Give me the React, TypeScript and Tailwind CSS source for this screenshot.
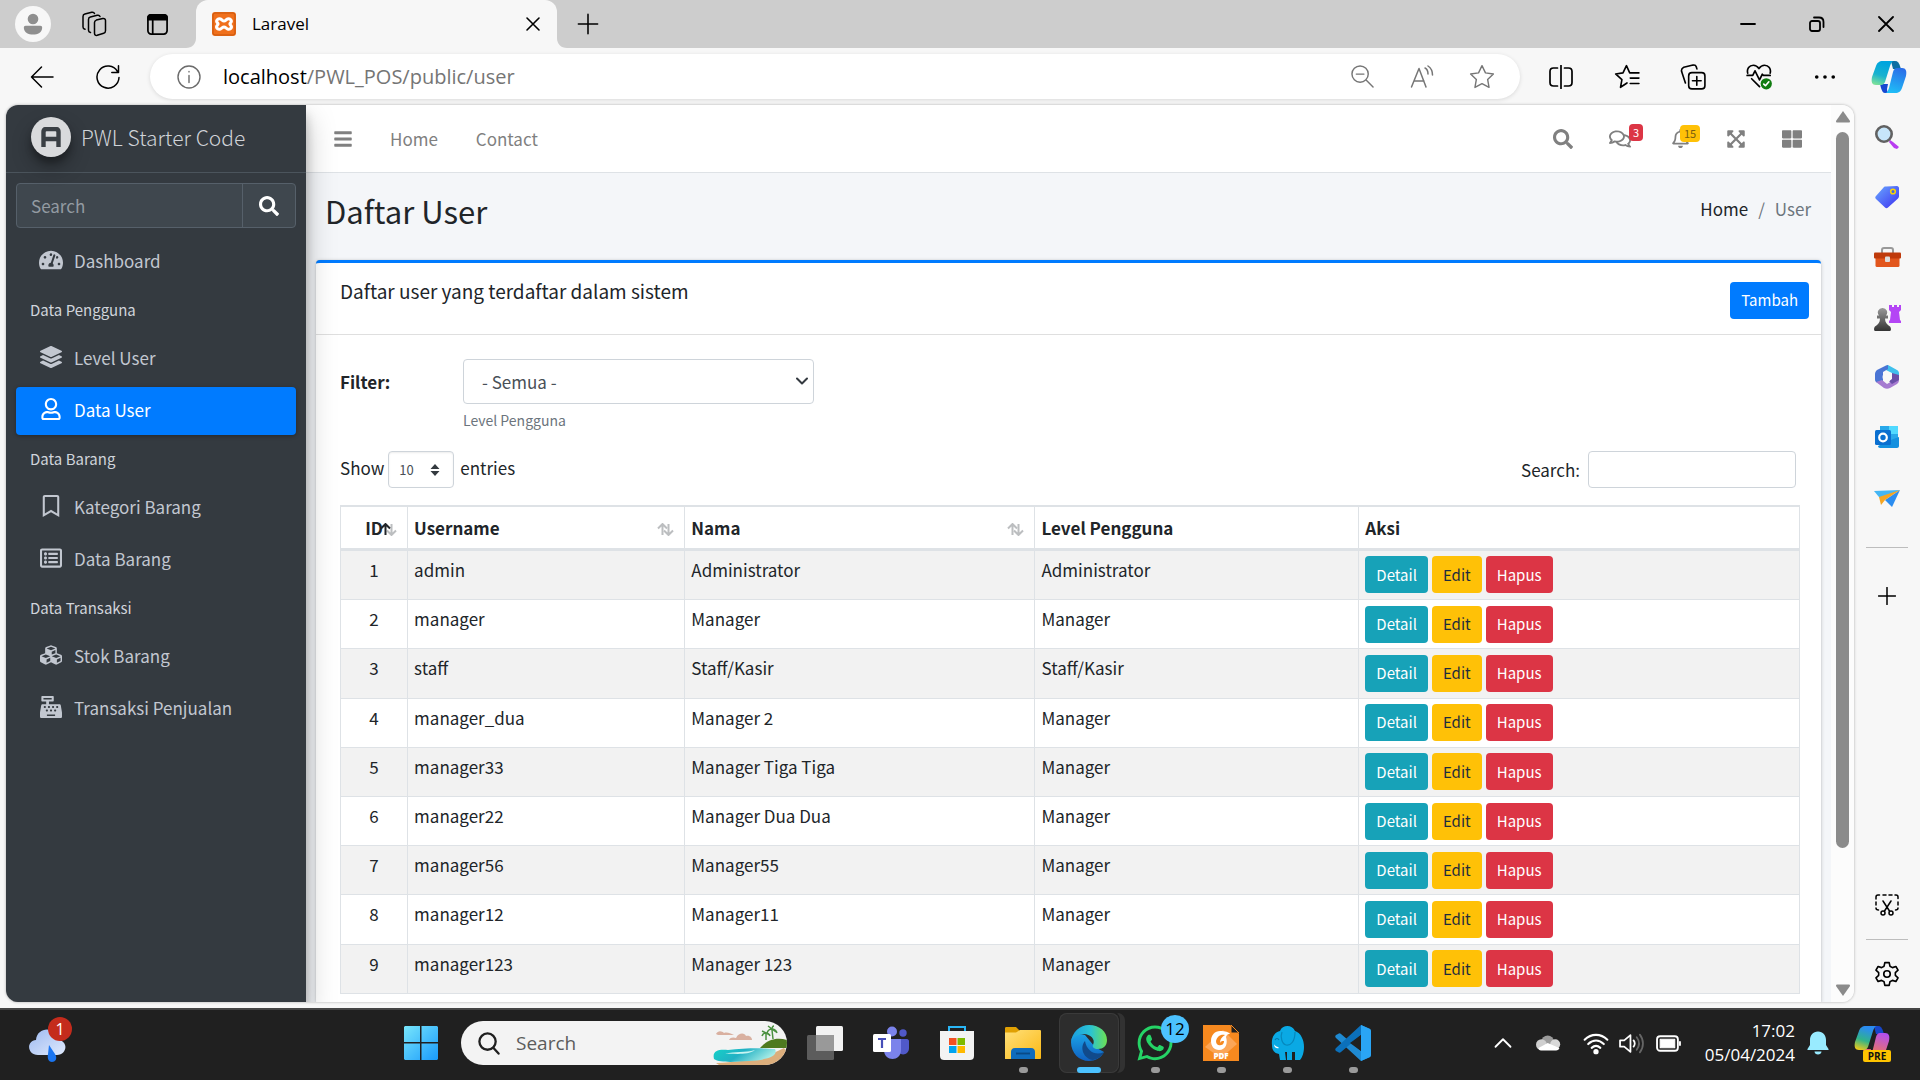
import React from "react";
import {
  FaSearch, FaTachometerAlt, FaLayerGroup, FaRegUser, FaRegBookmark, FaRegListAlt, FaCubes,
  FaCashRegister, FaBars, FaRegComments, FaRegBell, FaExpandArrowsAlt, FaThLarge, FaWhatsapp,
} from "react-icons/fa";

type P = { children: React.ReactNode; size?: string; box?: string; sw?: number };

function Line({ children, size = "size-6", box = "0 0 24 24", sw = 1.5 }: P) {
  return (
    <svg className={`${size} shrink-0`} viewBox={box} fill="none" stroke="currentColor" strokeWidth={sw} strokeLinecap="round" strokeLinejoin="round" aria-hidden="true">
      {children}
    </svg>
  );
}

function Art({ children, size = "size-9", box = "0 0 36 36" }: P) {
  return <svg className={`${size} shrink-0`} viewBox={box} aria-hidden="true">{children}</svg>;
}

function Slot({ label, className, children }: { label: string; className: string; children: React.ReactNode }) {
  return (
    <button type="button" aria-label={label} className={`flex shrink-0 items-center justify-center ${className}`}>
      {children}
    </button>
  );
}

function Copilot({ id, colors }: { id: string; colors: string[] }) {
  return (
    <>
      <defs>
        <linearGradient id={id + "a"} x1="0.6" y1="0" x2="0.3" y2="1">
          <stop offset="0.1" stopColor={colors[0]} />
          <stop offset="0.6" stopColor={colors[1]} />
          <stop offset="1" stopColor={colors[2]} />
        </linearGradient>
        <linearGradient id={id + "b"} x1="0.7" y1="0" x2="0.4" y2="1">
          <stop offset="0" stopColor={colors[3]} />
          <stop offset="1" stopColor={colors[4]} />
        </linearGradient>
      </defs>
      <path d="M20 2h4c3 0 4 2 5 5l1 3h-8z" fill={colors[5]} />
      <path d="M9 25l8 0-1 5c0 2 1 4 2 4h-4c-2 0-3-2-4-5z" fill={colors[6]} />
      <path d="M12 2h11c-2 0-3 2-4 5l-5 16c-1 2-2 3-4 3H5c-4 0-5-3-4-8l4-11c1-3 3-5 7-5z" fill={`url(#${id}a)`} />
      <path d="M24 34H14c2 0 3-2 4-5l4-16c1-3 2-4 4-4h5c4 0 5 3 4 8l-4 12c-1 3-3 5-7 5z" fill={`url(#${id}b)`} />
    </>
  );
}

function TitleBar() {
  return (
    <header className="flex h-12 shrink-0 bg-[#cdcdcd] text-black">
      <div className="flex w-[196px] shrink-0 items-center pl-0.5">
        <Slot label="Profile" className="h-12 w-[62px]">
          <span className="flex size-9 items-center justify-center rounded-full bg-[#f7f7f7]">
            <Art size="size-[22px]" box="0 0 24 24">
              <circle cx="12" cy="6.500" r="5.800" fill="#8f8f8f" />
              <path d="M4 14h16c1.500 0 2 1 2 2 0 5-5 7.500-10 7.500S2 21 2 16c0-1 .5-2 2-2z" fill="#8f8f8f" />
            </Art>
          </span>
        </Slot>
        <Slot label="Workspaces" className="h-12 w-[60px]">
          <Line size="size-[26px]" box="0 0 26 26" sw={1.5}>
            <path d="M13.500 11.500c0-1.400.7-2 1.800-2.400l6.500-1.600c1.600-.3 2.700.4 2.700 2v10.300c0 1.300-.7 2.200-1.800 2.500l-6.500 2c-1.500.3-2.700-.3-2.700-2z" />
            <path d="M9.500 21.500c-1.200-.3-2-1-2-2.300V8.500c0-1.400.7-2.200 1.900-2.500l6.800-1.700c1.500-.3 2.400.2 2.800 1.200" />
            <path d="M4 18.300c-1.200-.3-2-1-2-2.300V5.500C2 4.200 2.700 3.300 3.900 3l6.800-1.700c1.500-.3 2.400.2 2.800 1.200" />
          </Line>
        </Slot>
        <Slot label="Tab actions" className="h-12 w-[66px]">
          <Line size="size-[23px]" sw={1.8}>
            <rect x="2" y="2" width="20" height="20" rx="3.500" />
            <path d="M2 7V5c0-2 1-3 3-3h14c2 0 3 1 3 3v2z" fill="currentColor" />
            <path d="M7 7v15" />
          </Line>
        </Slot>
      </div>
      <div className="relative flex w-[361px] shrink-0 items-center rounded-t-xl bg-[#f7f7f7] pl-4">
        <span className="absolute bottom-0 -left-2.5"><Art size="size-2.5" box="0 0 10 10"><path d="M10 0v10H0C6 10 10 6 10 0z" fill="#f7f7f7" /></Art></span>
        <span className="absolute -right-2.5 bottom-0"><Art size="size-2.5" box="0 0 10 10"><path d="M0 0v10h10C4 10 0 6 0 0z" fill="#f7f7f7" /></Art></span>
        <Art size="size-6" box="0 0 24 24">
          <rect width="24" height="24" rx="3" fill="#f0701c" />
          <rect x="1" y="1" width="22" height="22" rx="2" fill="none" stroke="#c9560d" />
          <path d="M8.500 7c-3-1-5 2-3 4 .8.700.8 1.300 0 2-2 2-.5 5 3 4 1.500-.5 2-2 3.500-2s2 1.500 3.500 2c3.500 1 5-2 3-4-.8-.7-.8-1.300 0-2 2-2 0-5-3-4-1.500.5-2 2-3.500 2s-2-1.500-3.500-2z" fill="none" stroke="#fff" strokeWidth="3" />
        </Art>
        <span className="ml-4 flex-1 text-[17px]">Laravel</span>
        <Slot label="Close tab" className="size-12"><Line size="size-4"><path d="M3 3l18 18M21 3L3 21" strokeWidth="2.400" /></Line></Slot>
      </div>
      <Slot label="New tab" className="w-[62px]"><Line size="size-[22px]"><path d="M12 1.500v21M1.500 12h21" strokeWidth="1.700" /></Line></Slot>
      <div className="ml-auto flex">
        <Slot label="Minimize" className="w-[69px]"><Line size="size-4" box="0 0 16 16" sw={1.8}><path d="M1 8h14" /></Line></Slot>
        <Slot label="Restore" className="w-[69px]">
          <Line size="size-4" box="0 0 16 16" sw={1.8}><rect x="1" y="5" width="10" height="10" rx="2" /><path d="M5 1.500h5c3 0 4.500 1.500 4.500 4.500v5" /></Line>
        </Slot>
        <Slot label="Close" className="w-[69px]"><Line size="size-4" box="0 0 16 16" sw={1.8}><path d="M1 1l14 14M15 1L1 15" /></Line></Slot>
      </div>
    </header>
  );
}

function Toolbar() {
  return (
    <div className="flex h-[57px] shrink-0 items-center bg-[#f7f7f7] pl-[9px] text-black">
      <Slot label="Back" className="h-11 w-[66px]"><Line><path d="M23 12H1.500M11.500 2L1.500 12l10 10" /></Line></Slot>
      <Slot label="Refresh" className="h-11 w-[66px]"><Line><path d="M21.500 6.500A11 11 0 1 0 23 12.500M22.500.8v6.700h-6.700" /></Line></Slot>
      <form className="ml-[9px] flex h-[45px] min-w-0 flex-1 items-center rounded-full bg-white pr-2 pl-[27px] shadow-[0_1px_4px_rgba(0,0,0,0.12)]">
        <span className="text-[#6b6b6b]"><Line sw={1.4}><circle cx="12" cy="12" r="11" /><path d="M12 10.500v7M12 6.500v.4" /></Line></span>
        <div className="ml-[22px] flex-1 text-[20px] text-[#757575]"><span className="text-black">localhost</span>/PWL_POS/public/user</div>
        <div className="flex text-[#767676]">
          <Slot label="Zoom out" className="h-11 w-[60px]"><Line size="size-[23px]"><circle cx="9.500" cy="9.500" r="8.500" /><path d="M16 16l7 7M5.500 9.500h8" /></Line></Slot>
          <Slot label="Read aloud" className="h-11 w-[60px]"><Line><path d="M1.500 22L9 3.500 16 22M4 16h10M15 3c2 1 3 3 3 6M18 1c3 2 4.500 5 4.500 9" /></Line></Slot>
          <Slot label="Add to favorites" className="h-11 w-[60px]"><Line size="size-[26px]"><path d="M12 1.500l3.200 6.700 7.300 1-5.300 5.100 1.300 7.300L12 18.100l-6.500 3.500 1.300-7.300L1.500 9.200l7.300-1z" strokeWidth="1.300" /></Line></Slot>
        </div>
      </form>
      <div className="ml-2 flex shrink-0">
        <Slot label="Split screen" className="h-11 w-[66px]"><Line><path d="M12 .5v23M8.500 3H4.500C2.500 3 1 4.500 1 6.500v11c0 2 1.500 3.500 3.500 3.500h4M15.500 3h4C21.500 3 23 4.500 23 6.500v11c0 2-1.500 3.500-3.500 3.500h-4" strokeWidth="1.700" /></Line></Slot>
        <Slot label="Favorites" className="h-11 w-[66px]"><Line size="size-[26px]"><path d="M12 17.500l-6 4 1.300-7L1.500 9.200l6.800-1L11.500 1.500l3 6.700h8.500M15 13h8M15 18h8" /></Line></Slot>
        <Slot label="Collections" className="h-11 w-[66px]"><Line size="size-[26px]"><rect x="8" y="8" width="15" height="15" rx="3" /><path d="M15.500 11.500v8M11.500 15.500h8M5 17.500L1.500 7c-.5-2 0-3 2-4L12 1c1.500-.3 2.500 0 3 1.500l.6 2" /></Line></Slot>
        <Slot label="Browser essentials" className="h-11 w-[66px]">
          <Line size="size-[27px]">
            <path d="M1.500 9C.5 5 3 2 6.500 2c2.500 0 4 1.500 5 3 1-1.500 2.500-3 5-3 3.500 0 6 3 5 7M1 11h5l2-4 4 8 2.500-5 1 1h6M5 14l7 7" />
            <circle cx="18" cy="18.500" r="5" fill="#107c10" stroke="none" /><path d="M15.800 18.700l1.500 1.500 3-3.500" stroke="#fff" />
          </Line>
        </Slot>
        <Slot label="More" className="h-11 w-[66px]"><Line size="size-[22px]"><g fill="currentColor" stroke="none"><circle cx="3" cy="12" r="2" /><circle cx="12" cy="12" r="2" /><circle cx="21" cy="12" r="2" /></g></Line></Slot>
        <Slot label="Copilot" className="h-11 w-[62px]"><Art><Copilot id="c" colors={["#00a5de", "#18b2cf", "#7ae09b", "#2a6de8", "#1fbdf7", "#0c6ea3", "#1748d1"]} /></Art></Slot>
      </div>
    </div>
  );
}

function EdgeBar() {
  const slot = "h-[60px] w-full";
  return (
    <nav aria-label="Browser sidebar" className="flex w-[66px] shrink-0 flex-col items-center pt-0.5 pb-1 text-black">
      <Slot label="Search sidebar" className={slot}>
        <Art size="size-6" box="0 0 24 24"><path d="M15 15l3 2 6 5-2 2-3-1-5-6z" fill="#b83cf0" /><circle cx="9" cy="9" r="7.700" fill="#c7e6fa" stroke="#616161" strokeWidth="2.600" /></Art>
      </Slot>
      <Slot label="Shopping" className={slot}>
        <Art size="size-6" box="0 0 24 24">
          <defs><linearGradient id="tag" x1="0" y1="0" x2="1" y2="1"><stop stopColor="#69a8ff" /><stop offset="1" stopColor="#3c2ff0" /></linearGradient></defs>
          <path d="M11 1.500L22 1c1 0 2 1 2 2v8c0 1-.5 2-1 2.500L13 22.500c-1 1-2 1-3 0L1 14c-1-1-1-2 0-3L9 2c.5-.4 1-.5 2-.5z" fill="url(#tag)" /><circle cx="18" cy="6.500" r="2.300" fill="#4166dd" stroke="#fbd305" strokeWidth="1.600" />
        </Art>
      </Slot>
      <Slot label="Tools" className={slot}>
        <Art size="size-[27px]" box="0 0 27 27"><path d="M8 9V6c0-1 1-2 2-2h7c1 0 2 1 2 2v3" fill="none" stroke="#999" strokeWidth="2" /><rect x="1.500" y="11" width="24" height="12" rx="1.500" fill="#e2561d" /><rect y="8.500" width="27" height="6" rx="1" fill="#bf3a0b" /><rect x="11" y="12.500" width="5" height="5.500" rx="1" fill="#ddd" /></Art>
      </Slot>
      <Slot label="Games" className={slot}>
        <Art size="size-[27px]" box="0 0 27 27">
          <defs><linearGradient id="pawn" x1="0" y1="0" x2="0" y2="1"><stop stopColor="#999" /><stop offset="1" stopColor="#333" /></linearGradient></defs>
          <path d="M16 1h2v2h2V1h3v2h2V1h2v5l-2 2 1 8 1 1v2H15v-2l1-1 1-8-2-2V1z" fill="#b445f5" />
          <path d="M8.500 4a4.500 4.500 0 0 1 3.500 7.500h2v3h-3c0 4 2 6 5 8 1 1 1.500 4 0 4.500H1c-1.500-.5-1-3.500 0-4.500 3-2 5-4 5-8H3v-3h2A4.500 4.500 0 0 1 8.500 4z" fill="url(#pawn)" />
        </Art>
      </Slot>
      <Slot label="Microsoft 365" className={slot}>
        <Art size="size-6" box="0 0 24 24"><path d="M10 1l3-1 9 5c1 .5 2 2 2 3v6l-7-4V8l-6-3z" fill="#3fc0ec" /><path d="M10 1l3-1v4L8 7v9l-3 3-4-2c-1-1-1-2-1-3V9c0-2 1-3 2-4z" fill="#4a74d4" /><path d="M1 17l6-2 5 4 5-3 7-4v3c0 2-1 3-2 4l-7 4c-2 1-4 1-6 0z" fill="#a67bd0" /><path d="M17 8l7 2v5l-7 4-3-3 3-2z" fill="#6a4fa8" /><circle cx="12" cy="12" r="4.500" fill="#f7f7f7" /></Art>
      </Slot>
      <Slot label="Outlook" className={slot}>
        <Art size="size-6" box="0 0 24 24"><rect x="5" y="1" width="18" height="16" fill="#28a8ea" /><path d="M14 1h9v8h-9z" fill="#50d9ff" /><path d="M24 12v9c0 1-1 2-2 2H5c-1 0-2-1-2-2l10-5z" fill="#1490df" /><rect y="5" width="16" height="15" rx="1.500" fill="#0a6fd0" /><circle cx="8" cy="12.500" r="3.800" fill="none" stroke="#fff" strokeWidth="2.200" /></Art>
      </Slot>
      <Slot label="Drop" className={slot}>
        <Art size="size-[26px]" box="0 0 26 26"><path d="M0 7l26-1L9 15 5 13z" fill="#44b6f4" /><path d="M26 6L11 16l7 7z" fill="#2b8df0" /><path d="M26 6L5 13l2 8 4-5z" fill="#f5a623" /></Art>
      </Slot>
      <hr className="mt-5 w-[42px] border-[#bdbdbd]" />
      <Slot label="Customize" className="mt-[18px] h-[60px] w-full"><Line size="size-[18px]" box="0 0 18 18"><path d="M9 .5v17M.5 9h17" /></Line></Slot>
      <div className="mt-auto flex w-full flex-col items-center">
        <Slot label="Screenshot" className={slot}>
          <Line><path d="M1 6V4c0-1.500.8-2 2-2h1.500M8 2h3M14 2h3M20 2h1c1.500 0 2 .8 2 2v1.500M23 9v3M1 9v3M1 15c0 1.500.8 2 2.500 2M23 15c0 1.500-.8 2-2.500 2M8 8l6.500 10M16 8L9.500 18" /><circle cx="8" cy="20" r="2" /><circle cx="16" cy="20" r="2" /></Line>
        </Slot>
        <hr className="my-1 w-[42px] border-[#bdbdbd]" />
        <Slot label="Settings" className={slot}>
          <Line size="size-[26px]"><path d="M10 1.500h4l.7 3.300 2.300 1.300 3.200-1 2 3.400-2.500 2.300v2.400l2.500 2.300-2 3.400-3.200-1-2.300 1.300-.7 3.300h-4l-.7-3.300L7 17.900l-3.200 1-2-3.400 2.500-2.300v-2.400L1.800 8.500l2-3.400 3.200 1 2.300-1.300z" /><circle cx="12" cy="12" r="3" /></Line>
        </Slot>
      </div>
    </nav>
  );
}

const menu = [
  { items: [{ label: "Dashboard", Icon: FaTachometerAlt }] },
  { title: "Data Pengguna", items: [{ label: "Level User", Icon: FaLayerGroup }, { label: "Data User", Icon: FaRegUser, active: true }] },
  { title: "Data Barang", items: [{ label: "Kategori Barang", Icon: FaRegBookmark }, { label: "Data Barang", Icon: FaRegListAlt }] },
  { title: "Data Transaksi", items: [{ label: "Stok Barang", Icon: FaCubes }, { label: "Transaksi Penjualan", Icon: FaCashRegister }] },
] as { title?: string; items: { label: string; Icon: React.ComponentType<{ className?: string }>; active?: boolean }[] }[];

function SideMenu() {
  return (
    <aside className="relative z-10 w-[300px] shrink-0 bg-[#343a40] text-[17px] text-[#c2c7d0] shadow-[0_14px_28px_rgba(0,0,0,0.25),0_10px_10px_rgba(0,0,0,0.22)]">
      <a href="#" className="flex h-[68px] items-center border-b border-[#4b545c] pb-1 pl-[25px]">
        <span className="flex size-10 items-center justify-center rounded-full bg-[#d9dadc] shadow-[0_10px_20px_rgba(0,0,0,0.3),0_6px_6px_rgba(0,0,0,0.25)]">
          <Art size="size-5" box="0 0 20 20"><path d="M2.500 20V5c0-2 1-3 3-3h9c2 0 3 1 3 3v15M2.500 12h15" fill="none" stroke="#3a3f44" strokeWidth="4.400" /></Art>
        </span>
        <span className="ml-2.5 pt-0.5 text-[21px] font-light text-[#d0d3d8]">PWL Starter Code</span>
      </a>
      <div className="px-2.5 pt-2.5">
        <div className="mb-2.5 flex h-[45px] overflow-hidden rounded border border-[#56606a] bg-[#3f474e]">
          <input aria-label="Search menu" placeholder="Search" className="min-w-0 flex-1 bg-transparent px-3.5 text-white placeholder:text-[#939ba2]" />
          <button type="button" aria-label="Search" className="flex w-[53px] items-center justify-center border-l border-[#56606a] text-white"><FaSearch className="size-5" /></button>
        </div>
        {menu.map((group, i) => (
          <section key={i}>
            {group.title && <h2 className="h-[45px] px-3.5 pt-2 text-[15px] leading-6 text-[#d0d4db]">{group.title}</h2>}
            {group.items.map(({ label, Icon, active }) => (
              <a key={label} href="#" className={`mb-1 flex h-12 items-center rounded pb-1 pl-5 ${active ? "bg-[#007bff] text-white shadow-[0_1px_4px_rgba(0,0,0,0.3)]" : ""}`}>
                <span className="flex w-[30px] justify-center"><Icon className={label === "Dashboard" ? "size-6" : "size-[22px]"} /></span>
                <span className="ml-2 pt-0.5">{label}</span>
              </a>
            ))}
          </section>
        ))}
      </div>
    </aside>
  );
}

function NavBar() {
  const badge = "absolute -top-1 rounded px-1 text-[11px] leading-[17px]";
  return (
    <nav className="flex h-[68px] shrink-0 items-center border-b border-[#dee2e6] bg-white pr-[29px] pl-[27px] text-[17px] text-[#808080]">
      <button type="button" aria-label="Toggle menu"><FaBars className="size-5" /></button>
      <a href="#" className="ml-[37px]">Home</a>
      <a href="#" className="ml-[38px]">Contact</a>
      <div className="ml-auto flex items-center">
        <button type="button" aria-label="Search" className="mr-9"><FaSearch className="size-5" /></button>
        <button type="button" aria-label="Messages" className="relative mr-10"><FaRegComments className="size-[22px]" /><span className={`${badge} left-5 bg-[#dc3545] text-white`}>3</span></button>
        <button type="button" aria-label="Notifications" className="relative mr-9"><FaRegBell className="size-[19px]" /><span className={`${badge} left-[9px] bg-[#ffc107] text-[#7a5d10]`}>15</span></button>
        <button type="button" aria-label="Fullscreen" className="mr-9"><FaExpandArrowsAlt className="size-5" /></button>
        <button type="button" aria-label="Widgets"><FaThLarge className="size-5" /></button>
      </div>
    </nav>
  );
}

const rows = [
  ["admin", "Administrator", "Administrator"],
  ["manager", "Manager", "Manager"],
  ["staff", "Staff/Kasir", "Staff/Kasir"],
  ["manager_dua", "Manager 2", "Manager"],
  ["manager33", "Manager Tiga Tiga", "Manager"],
  ["manager22", "Manager Dua Dua", "Manager"],
  ["manager56", "Manager55", "Manager"],
  ["manager12", "Manager11", "Manager"],
  ["manager123", "Manager 123", "Manager"],
];

function Sort({ asc }: { asc?: boolean }) {
  return (
    <svg className="absolute top-4 right-2.5 h-[13px] w-[17px]" viewBox="0 0 17 13" fill="none" strokeWidth="2" aria-hidden="true">
      <path d="M11.500 1v11M7 7.500l4.500 4.500 4.500-4.500" stroke="#bcbec0" />
      <path d="M5.500 12V1M1 5.500L5.500 1 10 5.500" stroke={asc ? "#212529" : "#bcbec0"} />
    </svg>
  );
}

function UserTable() {
  const th = "relative border border-t-2 border-b-[3px] border-[#dee2e6] px-1.5 font-bold";
  const td = "border border-[#dee2e6] px-1.5 pt-1 align-top leading-[30px]";
  const btn = "h-[37px] rounded px-[11px] text-[15px]";
  return (
    <table className="mt-[17px] h-[489px] w-full table-fixed border-collapse">
      <colgroup><col className="w-[4.600%]" /><col className="w-[19%]" /><col className="w-[24%]" /><col className="w-[22.200%]" /><col /></colgroup>
      <thead>
        <tr className="h-[43px]">
          <th className={`${th} text-center`}>ID<Sort asc /></th>
          <th className={`${th} text-left`}>Username<Sort /></th>
          <th className={`${th} text-left`}>Nama<Sort /></th>
          <th className={`${th} text-left`}>Level Pengguna</th>
          <th className={`${th} text-left`}>Aksi</th>
        </tr>
      </thead>
      <tbody>
        {rows.map((r, i) => (
          <tr key={r[0]} className="odd:bg-[#f2f2f2]">
            <td className={`${td} text-center`}>{i + 1}</td>
            {r.map((c, j) => <td key={j} className={td}>{c}</td>)}
            <td className="border border-[#dee2e6] px-1.5 align-middle">
              <div className="flex gap-1">
                <button type="button" className={`${btn} bg-[#17a2b8] text-white`}>Detail</button>
                <button type="button" className={`${btn} bg-[#ffc107] text-[#1f2d3d]`}>Edit</button>
                <button type="button" className={`${btn} bg-[#dc3545] text-white`}>Hapus</button>
              </div>
            </td>
          </tr>
        ))}
      </tbody>
    </table>
  );
}

function Page() {
  return (
    <main className="flex min-w-0 flex-1 flex-col overflow-hidden bg-[#f4f6f9] text-[17px] text-[#212529]">
      <NavBar />
      <div className="flex h-[87px] shrink-0 items-start justify-between pt-5 pr-5 pl-[19px]">
        <h1 className="text-[31px] leading-9">Daftar User</h1>
        <nav aria-label="Breadcrumb" className="pt-1 leading-6"><a href="#">Home</a><span className="px-2.5 text-[#6c757d]">/</span><span className="text-[#6c757d]">User</span></nav>
      </div>
      <section className="mr-2.5 ml-2.5 flex-1 rounded-t border-t-[3px] border-[#007bff] bg-white shadow-[0_0_1px_rgba(0,0,0,0.2),0_1px_4px_rgba(0,0,0,0.2)]">
        <div className="flex h-[72px] items-start justify-between border-b border-[#dfdfdf] pr-3 pl-6">
          <h2 className="pt-3.5 text-[19px] leading-7">Daftar user yang terdaftar dalam sistem</h2>
          <button type="button" className="mt-[19px] h-[37px] rounded bg-[#007bff] px-[11px] text-[15px] text-white">Tambah</button>
        </div>
        <div className="pt-6 pr-[21px] pl-6">
          <div className="flex">
            <label htmlFor="level" className="w-[123px] pt-2.5 font-bold">Filter:</label>
            <div className="relative">
              <select id="level" className="block h-[45px] w-[351px] appearance-none rounded border border-[#ced4da] bg-white px-[18px] text-[#495057]"><option>- Semua -</option></select>
              <span className="pointer-events-none absolute top-4 right-1.5 text-[#343a40]"><Line size="size-3" box="0 0 12 12" sw={2}><path d="M1 3.500l5 5 5-5" /></Line></span>
              <p className="mt-1.5 text-[14px] leading-5 text-[#6c757d]">Level Pengguna</p>
            </div>
          </div>
          <div className="mt-[21px] flex h-[37px] items-center justify-between">
            <div className="flex items-center">
              <label htmlFor="len" className="pb-1">Show</label>
              <span className="relative mr-1.5 ml-1">
                <select id="len" className="block h-[37px] w-[66px] appearance-none rounded border border-[#ced4da] bg-white px-2.5 text-[13px] text-[#495057] shadow-[inset_0_1px_2px_rgba(0,0,0,0.075)]"><option>10</option></select>
                <span className="pointer-events-none absolute top-3 right-3.5"><Art size="h-3.5 w-2.5" box="0 0 10 14"><path d="M5 1l4.500 5h-9zM5 13l4.500-5h-9z" fill="#343a40" /></Art></span>
              </span>
              <span className="pb-1">entries</span>
            </div>
            <div className="flex items-center pr-1">
              <label htmlFor="find" className="mr-2">Search:</label>
              <input id="find" className="h-[37px] w-[208px] rounded border border-[#ced4da] bg-white px-2.5" />
            </div>
          </div>
          <UserTable />
        </div>
      </section>
    </main>
  );
}

function ScrollRail() {
  return (
    <div className="flex w-[23px] shrink-0 flex-col items-center bg-[#fcfcfc] py-1.5">
      <Art size="h-3 w-4" box="0 0 16 12"><path d="M8 0l7 10c0 1-.5 1.500-1 1.500H2c-.5 0-1-.5-1-1.500z" fill="#8b8b8b" /></Art>
      <div className="mt-[9px] flex w-full flex-1 justify-center"><div className="h-[84%] w-[13px] rounded-full bg-[#8b8b8b]" /></div>
      <Art size="h-3 w-4" box="0 0 16 12"><path d="M8 12L1 2C1 1 1.500.5 2 .5h12c.5 0 1 .5 1 1.500z" fill="#8b8b8b" /></Art>
    </div>
  );
}

function TaskApp({ label, run, active, children }: { label: string; run?: boolean; active?: boolean; children: React.ReactNode }) {
  return (
    <button type="button" aria-label={label} className={`relative flex h-[60px] w-[60px] shrink-0 items-center justify-center rounded-lg ${active ? "bg-[#2d2d2d] shadow-[inset_0_0_0_1px_#3a3a3a]" : ""}`}>
      {active && <span className="absolute top-0 -right-1.5"><Art size="h-[60px] w-3" box="0 0 12 60"><path d="M4 0c5 0 8 3 8 8v44c0 5-3 8-8 8 2-2 3-4 3-8V8c0-4-1-6-3-8z" fill="#323232" /></Art></span>}
      {children}
      {run && <span className="absolute bottom-0 h-1.5 w-[9px] rounded-full bg-[#9a9a9a]" />}
      {active && <span className="absolute bottom-0 h-1.5 w-6 rounded-full bg-[#4cc2ff]" />}
    </button>
  );
}

function Taskbar() {
  return (
    <footer className="flex h-[72px] shrink-0 items-center border-t-2 border-[#454545] bg-[#202020] pb-1 text-white">
      <button type="button" aria-label="Weather" className="relative ml-7 flex h-12 w-12 shrink-0 items-center">
        <Art size="size-10" box="0 0 40 40">
          <defs><linearGradient id="cloud" x1="0" y1="0" x2="1" y2="1"><stop stopColor="#9db9f0" /><stop offset="1" stopColor="#dfeafd" /></linearGradient></defs>
          <path d="M10 32c-11 0-12-14-2-15 1-14 21-14 22 0 11 1 9 15-1 15z" fill="url(#cloud)" /><path d="M21 22l6 9c3 5 0 8-3 8s-5-3-4-8z" fill="#1a75f0" />
        </Art>
        <span className="absolute -top-0.5 left-5 flex size-6 items-center justify-center rounded-full bg-[#c42b1c] text-[16px]">1</span>
      </button>
      <div className="ml-[312px] flex items-center">
        <Slot label="Start" className="h-[60px] w-[66px]">
          <Art size="size-9">
            <defs><linearGradient id="win" gradientUnits="userSpaceOnUse" x1="0" y1="0" x2="36" y2="36"><stop stopColor="#7be8fb" /><stop offset="1" stopColor="#1698fb" /></linearGradient></defs>
            <path d="M2 1h15v16H1V2zM18.500 1H34l1 1v15H18.500zM1 18.500h16V35H2l-1-1zM18.500 18.500H35V34l-1 1H18.500z" fill="url(#win)" />
          </Art>
        </Slot>
        <div className="relative ml-[7px] flex h-11 w-[326px] items-center overflow-hidden rounded-full bg-[#f3f3f3] pl-4 text-[#1f1f1f]">
          <Line size="size-[23px]" sw={2.4}><circle cx="11" cy="10" r="8.500" /><path d="M17 16.500l5.500 6" /></Line>
          <input aria-label="Search Windows" placeholder="Search" className="ml-4 w-40 bg-transparent text-[19px] placeholder:text-[#5c5c5c]" />
          <svg className="ml-auto h-11 w-[76px] shrink-0" viewBox="0 0 76 44" aria-hidden="true">
            <defs><linearGradient id="sea" x1="0" y1="0" x2="1" y2="0.300"><stop stopColor="#14d2c8" /><stop offset="0.500" stopColor="#22b1c4" /><stop offset="1" stopColor="#a5ebe6" /></linearGradient></defs>
            <path d="M5 13c2-4 6-3 8-1 3-1 6 0 10 2H7zM18 19c1-3 5-3 7-2 3-6 9-5 10-2 4-1 6 2 6 4z" fill="#d9b0a0" />
            <path d="M5 42c26-1 50-5 68-15l3 4v13H8z" fill="#dcae7c" />
            <path d="M3 38c-2-8 4-10 14-9 16-2 36-2 47-1 4 8-10 11-26 12-14 1-29 2-35-2z" fill="url(#sea)" />
            <path d="M14 33c10-3 20-1 30-4-8 6-22 3-30 4z" fill="#c9f5f2" />
            <path d="M49 27c7-8 16-11 27-8v8z" fill="#4e7a1f" />
            <path d="M55 19v-7M62 18l-1-9M51 15c1-3 3-3 4-3s3 0 4 3M51 10l8 4M56 12c1-3 3-4 5-4s4 1 5 4M57 5l8 6M61 9c0-3 1-4 2-4" fill="none" stroke="#4b9140" strokeWidth="1.500" />
          </svg>
        </div>
        <div className="ml-2 flex gap-1.5">
          <TaskApp label="Task view"><Art><rect x="9" y="1" width="27" height="25" rx="1.500" fill="#f2f2f2" /><rect x="0" y="10" width="27" height="25" rx="1.500" fill="#868686" fillOpacity="0.6" /><rect x="9" y="10" width="18" height="16" fill="#999" /></Art></TaskApp>
          <TaskApp label="Teams"><Art><circle cx="19" cy="6.500" r="5" fill="#7b83eb" /><circle cx="30" cy="8" r="3.700" fill="#5059c9" /><path d="M24 14h10c1 0 2 1 2 2v7c0 6-6 8-10 5z" fill="#5059c9" /><path d="M11 14h17v11c0 12-17 12-17 0z" fill="#7b83eb" /><rect x="0" y="9" width="18" height="18" rx="1.500" fill="#fff" /><path d="M5 14h8M9 14v9" stroke="#464eb8" strokeWidth="2.200" /></Art></TaskApp>
          <TaskApp label="Store"><Art><path d="M10 7V2h16v5" fill="none" stroke="#29b6f6" strokeWidth="2" /><path d="M1 6h34v25c0 3-2 4-4 4H5c-2 0-4-1-4-4z" fill="#f3f3f3" /><path d="M10 13h7.500v7H10z" fill="#f25022" /><path d="M18.500 13H26v7h-7.500z" fill="#7fba00" /><path d="M10 21h7.500v7H10z" fill="#00a4ef" /><path d="M18.500 21H26v7h-7.500z" fill="#ffb900" /></Art></TaskApp>
          <TaskApp label="Explorer" run>
            <Art>
              <defs><linearGradient id="fold" x1="0" y1="0" x2="1" y2="1"><stop stopColor="#ffe07a" /><stop offset="1" stopColor="#fbb915" /></linearGradient></defs>
              <path d="M0 3c0-1 1-1 1.500-1H11l4 4v4H0z" fill="#e0a003" /><path d="M0 7.500h11L15 5h20c1 0 1 1 1 1.500V33c0 1-1 1-1 1H1c-1 0-1 0-1-1z" fill="url(#fold)" />
              <path d="M6 34v-7c0-2 1-4 4-4h16c3 0 4 2 4 4v7z" fill="#0f6cbd" /><path d="M11 28.500h14" stroke="#094a86" strokeWidth="1.800" />
            </Art>
          </TaskApp>
          <TaskApp label="Edge" active>
            <Art>
              <defs><linearGradient id="eg" x1="0" y1="0.500" x2="1" y2="0.500"><stop stopColor="#1a9de0" /><stop offset="0.550" stopColor="#2bc3d2" /><stop offset="1" stopColor="#6de152" /></linearGradient><linearGradient id="eb" x1="0" y1="0" x2="0" y2="1"><stop stopColor="#1ba2e6" /><stop offset="1" stopColor="#0f5fc0" /></linearGradient></defs>
              <path d="M0 17C1 9 6 8 14 10l10 12 9 5c-3 6-9 9-15 9C8 36 0 28 0 17z" fill="url(#eb)" />
              <path d="M14 16c-6 7-1 18 8 19 5-1 9-4 11-8-8 4-17 0-19-11z" fill="#114a8b" />
              <path d="M0 17C1 7 9 0 18 0c11 0 18 7 18 15 0 6-4 9-9 9-4 0-6-2-5-4 3-6-3-11-9-11C7 9 2 12 0 17z" fill="url(#eg)" />
            </Art>
          </TaskApp>
          <TaskApp label="WhatsApp" run><FaWhatsapp className="size-10 text-[#25d366]" /><span className="absolute top-0.5 -right-1 flex size-7 items-center justify-center rounded-full bg-[#4cc2ff] text-[17px] text-black">12</span></TaskApp>
          <TaskApp label="PDF reader" run>
            <Art>
              <path d="M0 0h27l9 9v27H0z" fill="#f6891f" /><path d="M28 0v8h8z" fill="#202020" stroke="#f6891f" />
              <path d="M2 22L20 5l14 14-16 14z" fill="#fba657" />
              <path d="M17 6c5 0 9 1 10 3-3 0-3 1-4 3 2 6 0 13-7 13-5 0-8-4-8-9 0-6 4-10 9-10z" fill="#fff" />
              <path d="M22 10c-5-1-8 2-9 6 0 4 3 5 5 4 2 0 3-2 3-4-2 0-3 0-4 2 0-4 2-6 5-8z" fill="#f6891f" />
              <text x="18" y="33.500" fontSize="8" fontWeight="800" fontFamily="Open Sans, sans-serif" textAnchor="middle" fill="#fff">PDF</text>
            </Art>
          </TaskApp>
          <TaskApp label="Elephant client" run><Art><path d="M3 20c-1-8 3-13 8-14 2-6 12-7 15 0 6 2 9 9 9 16 0 6-2 11-4 13h-5v-8h-3v8h-5v-8h-2l1 8h-6l-1-6c-5-1-7-4-7-9z" fill="#0aa9e4" /><path d="M13 7c-2 5 0 12 4 13 5 1 9-4 9-13" fill="none" stroke="#0688bd" strokeWidth="1.200" /><path d="M6 15c1-2 3-2 4 0" fill="none" stroke="#0677a8" strokeWidth="1.200" /><path d="M5 19c1 3 4 2 5 4-2 1-5 0-5-4z" fill="#fff" /></Art></TaskApp>
          <TaskApp label="VS Code" run><Art><path d="M26 0l9 4v28l-9 4L1 13c-1-1-1-2 0-3l2-1c1-1 2-1 3 0l20 17z" fill="#1f8ad2" /><path d="M26 0L1 23c-1 1-1 2 0 3l2 1c1 1 2 1 3 0l20-17z" fill="#0b70bb" /><path d="M26 10v16L15 18z" fill="#202020" /><path d="M26 0l9 4c.7.300 1 1 1 2v24c0 1-.3 1.700-1 2l-9 4z" fill="#2aa5f5" /></Art></TaskApp>
        </div>
      </div>
      <div className="ml-auto flex shrink-0 items-center pr-7">
        <Line size="size-[18px]" sw={2.4}><path d="M2 17L12 7l10 10" /></Line>
        <div className="ml-6"><Art size="h-5 w-[25px]" box="0 0 30 20"><circle cx="14" cy="8.500" r="7.500" fill="#9b9b9b" /><circle cx="6.500" cy="12" r="6.500" fill="#cfcfcf" /><circle cx="23" cy="11.500" r="6" fill="#d9d9d9" /><path d="M3 16l11-6 14 6c0 2-2 3-4 3H6c-2 0-3-1-3-3z" fill="#fff" /></Art></div>
        <div className="ml-[22px]"><Line size="size-[26px]" sw={1.9}><path d="M1.500 9C7.500 3 16.500 3 22.500 9M4.800 13c4.500-4.300 10-4.300 14.400 0M8 16.500c2.500-2.300 5.500-2.300 8 0" /><circle cx="12" cy="20" r="1.500" fill="#fff" /></Line></div>
        <div className="ml-2.5"><Line size="size-[25px]" sw={1.7}><path d="M1 9v6h4l6 5V4L5 9zM14 9c1.500 2 1.500 4 0 6" /><path d="M17 6c3 4 3 8 0 12M20 3.500c4 5 4 12 0 17" stroke="#666" /></Line></div>
        <div className="ml-3"><Line size="size-[25px]" sw={1.8}><rect x="1" y="5" width="20" height="14" rx="3" /><rect x="4" y="8" width="14" height="8" fill="#fff" strokeWidth="1" /><path d="M23 10.500v3" /></Line></div>
        <div className="ml-6 text-right text-[17px] leading-6"><div>17:02</div><div>05/04/2024</div></div>
        <div className="ml-3"><Art size="h-6 w-[22px]" box="0 0 22 24"><path d="M11 .5c5 0 8 4 8 8.500v5l2.500 4c.3.800 0 1-.8 1H1.300c-.8 0-1.100-.2-.8-1L3 14V9C3 4.500 6 .5 11 .5zM7.500 20.500h7c0 4-7 4-7 0z" fill="#99ebff" /></Art></div>
        <div className="ml-[25px]">
          <Art size="size-[38px]" box="0 0 38 38">
            <Copilot id="p" colors={["#2b8cf0", "#30b38a", "#e5c91f", "#b34ff0", "#f77c46", "#1746c9", "#ee5f75"]} />
            <rect x="9" y="26" width="28" height="12" rx="2" fill="#ffc400" />
            <text x="23" y="35.500" fontSize="10" fontWeight="700" fontFamily="Open Sans, sans-serif" textAnchor="middle" fill="#111">PRE</text>
          </Art>
        </div>
      </div>
    </footer>
  );
}

export default function App() {
  return (
    <div className="flex h-screen flex-col overflow-hidden bg-[#f7f7f7] font-['Open_Sans',sans-serif]">
      <TitleBar />
      <Toolbar />
      <div className="flex min-h-0 flex-1">
        <div className="mb-1.5 ml-1.5 flex min-w-0 flex-1 overflow-hidden rounded-xl font-['Noto_Sans_CJK_SC',sans-serif] shadow-[0_0_3px_rgba(0,0,0,0.3)]">
          <SideMenu />
          <Page />
          <ScrollRail />
        </div>
        <EdgeBar />
      </div>
      <Taskbar />
    </div>
  );
}
